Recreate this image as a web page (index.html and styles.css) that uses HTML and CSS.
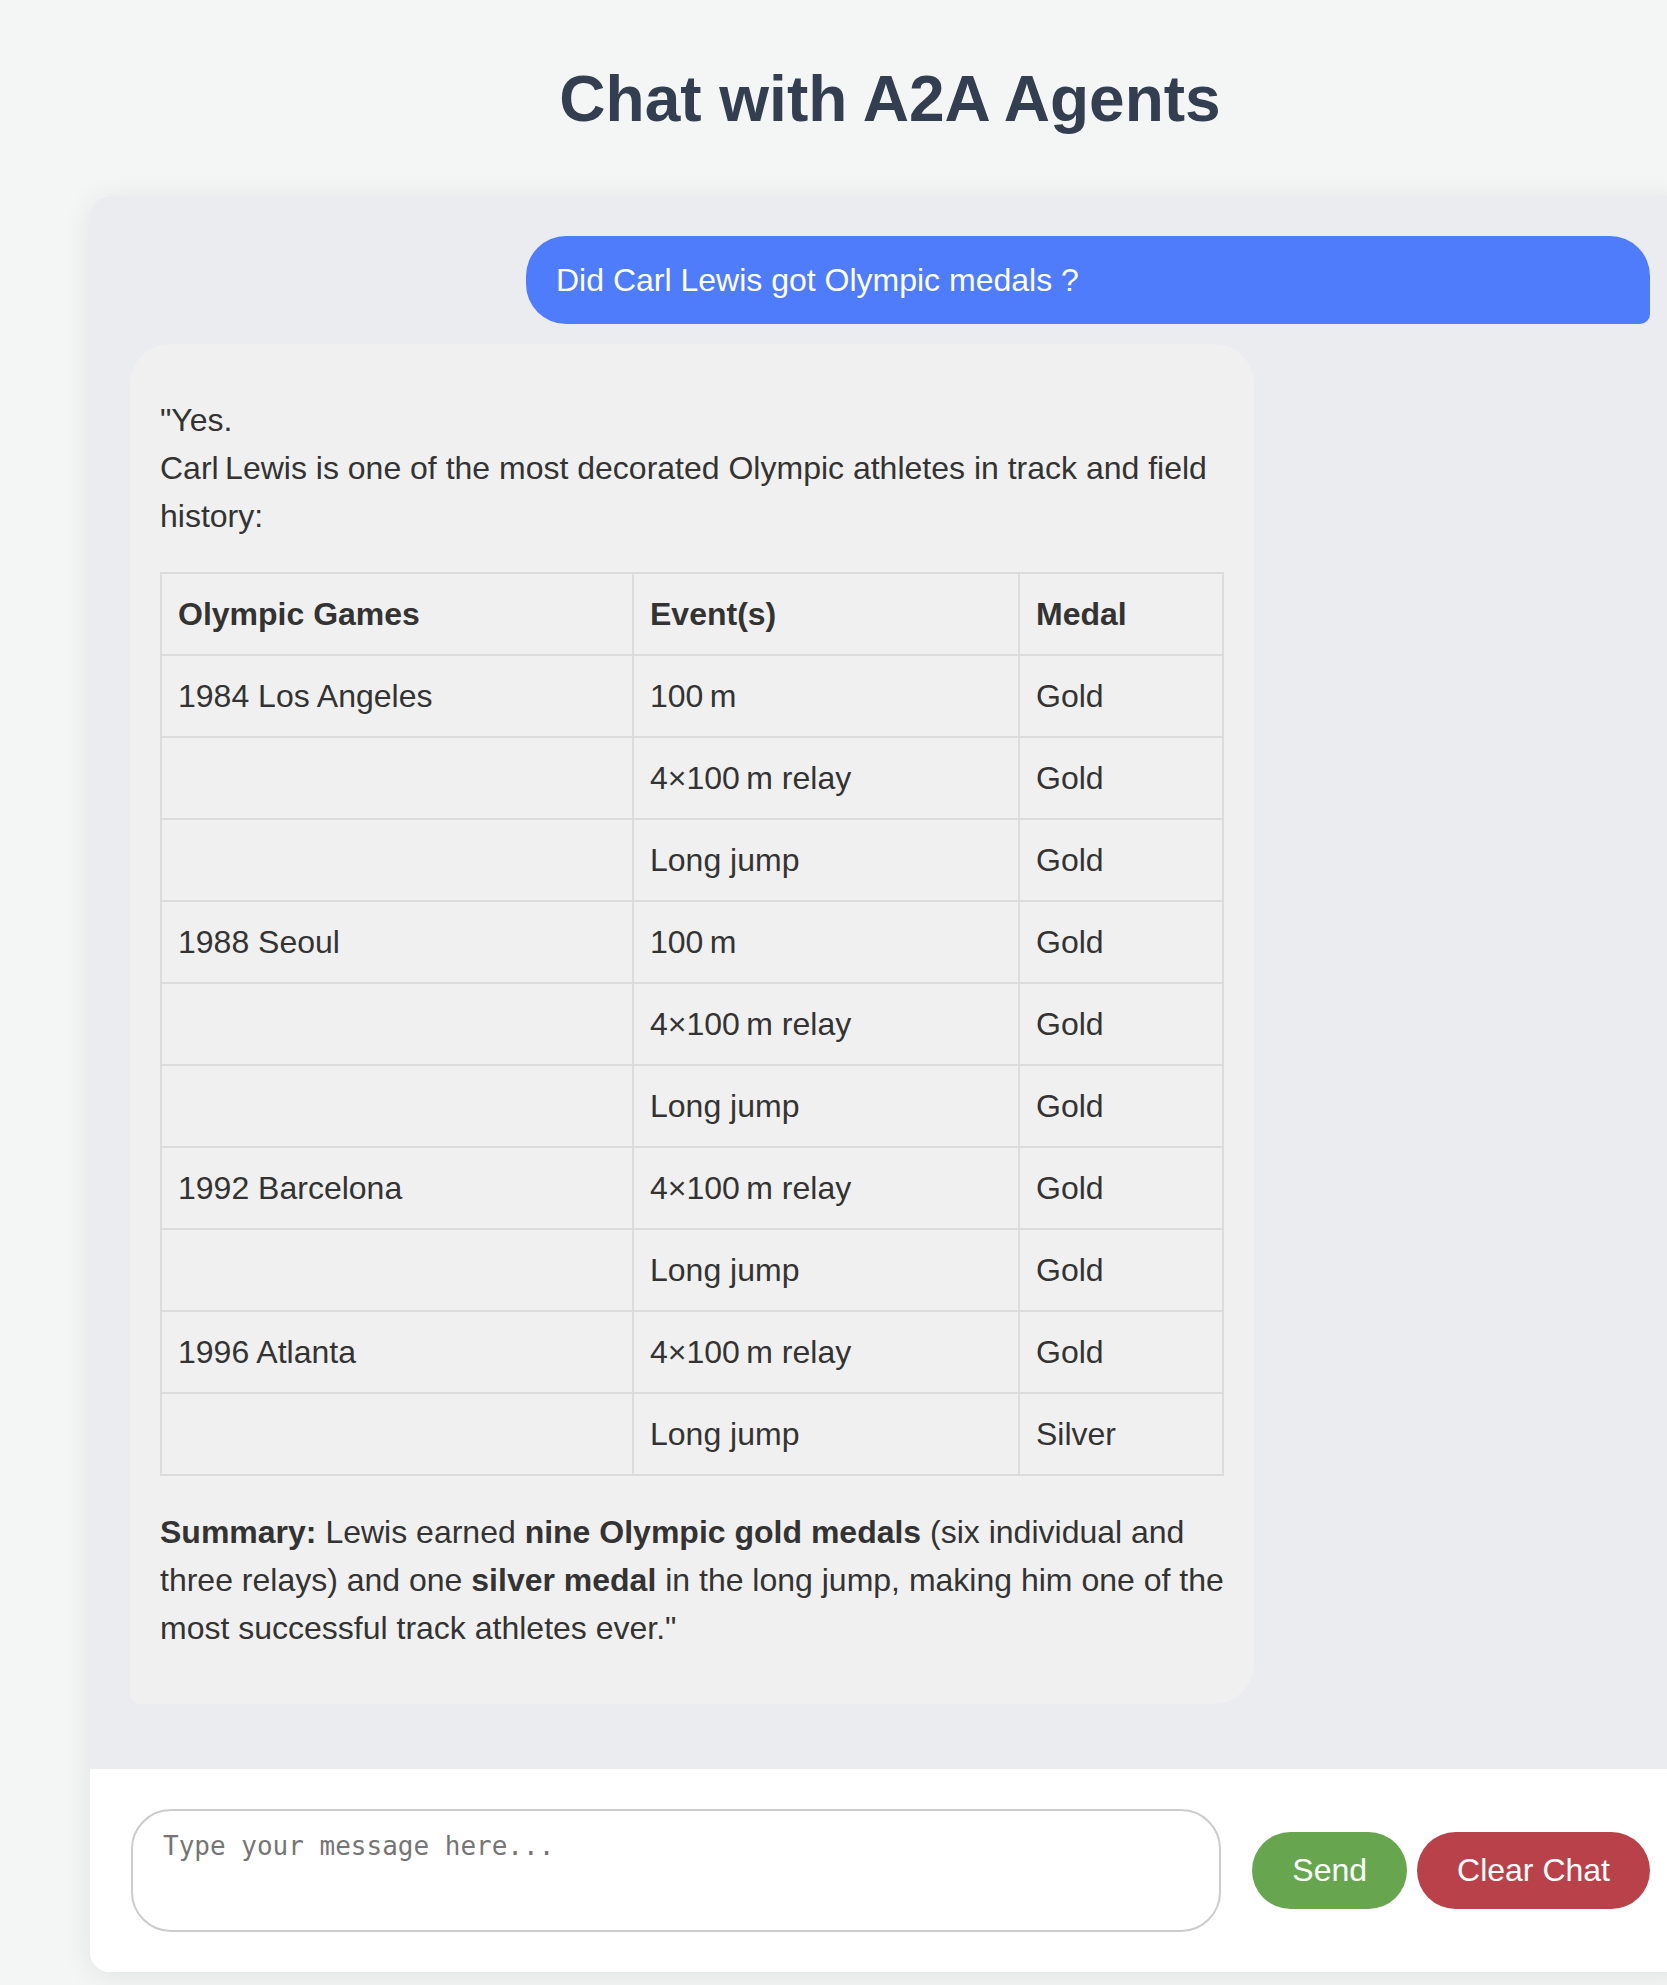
FILE: index.html
```html
<!DOCTYPE html>
<html lang="en">
<head>
<meta charset="utf-8">
<title>Chat with A2A Agents</title>
<link rel="stylesheet" href="styles.css">
</head>
<body>
<div class="page">
  <h1 class="title">Chat with A2A Agents</h1>
  <div class="chat">
    <div class="messages">
      <div class="msg user">Did Carl Lewis got Olympic medals ?</div>
      <div class="msg agent">
        <p>"Yes.<br>Carl&#8239;Lewis is one of the most decorated Olympic athletes in track and field history:</p>
        <table class="medals">
          <colgroup>
            <col class="c1">
            <col class="c2">
            <col class="c3">
          </colgroup>
          <thead>
            <tr><th>Olympic Games</th><th>Event(s)</th><th>Medal</th></tr>
          </thead>
          <tbody>
            <tr><td>1984 Los Angeles</td><td>100&#8239;m</td><td>Gold</td></tr>
            <tr><td></td><td>4×100&#8239;m relay</td><td>Gold</td></tr>
            <tr><td></td><td>Long jump</td><td>Gold</td></tr>
            <tr><td>1988 Seoul</td><td>100&#8239;m</td><td>Gold</td></tr>
            <tr><td></td><td>4×100&#8239;m relay</td><td>Gold</td></tr>
            <tr><td></td><td>Long jump</td><td>Gold</td></tr>
            <tr><td>1992 Barcelona</td><td>4×100&#8239;m relay</td><td>Gold</td></tr>
            <tr><td></td><td>Long jump</td><td>Gold</td></tr>
            <tr><td>1996 Atlanta</td><td>4×100&#8239;m relay</td><td>Gold</td></tr>
            <tr><td></td><td>Long jump</td><td>Silver</td></tr>
          </tbody>
        </table>
        <p><strong>Summary:</strong> Lewis earned <strong>nine Olympic gold medals</strong> (six individual and three relays) and one <strong>silver medal</strong> in the long jump, making him one of the most successful track athletes ever."</p>
      </div>
    </div>
    <div class="input-row">
      <textarea class="input" placeholder="Type your message here..."></textarea>
      <div class="actions">
        <button class="btn send">Send</button>
        <button class="btn clear">Clear Chat</button>
      </div>
    </div>
  </div>
</div>
</body>
</html>
```

FILE: styles.css
```css
html, body {
  margin: 0;
  padding: 0;
  overflow-x: hidden;
}

body {
  background: #f4f6f5;
  font-family: "Liberation Sans", Arial, sans-serif;
  font-size: 32px;
  line-height: 1.5;
  color: #333;
}

.page {
  width: 1600px;
  margin-left: 90px;
  padding-top: 51px;
}

.title {
  margin: 0 0 49px;
  font-size: 64px;
  line-height: 96px;
  font-weight: bold;
  text-align: center;
  color: #333f50;
}

.chat {
  border-radius: 20px;
  overflow: hidden;
  background: #fff;
  box-shadow: 0 4px 30px rgba(0, 0, 0, 0.08);
  margin-bottom: 13px;
}

.messages {
  background: #ebecf0;
  padding: 40px 40px 45px;
}

.msg {
  max-width: 70%;
  padding: 20px 30px;
  margin-bottom: 20px;
}

.user {
  margin-left: auto;
  background: #4e7cfa;
  color: #fff;
  border-radius: 40px 40px 10px 40px;
}

.agent {
  background: #f0f0f0;
  color: #333;
  border-radius: 40px 40px 40px 10px;
}

.agent p {
  margin: 32px 0;
}

.medals {
  width: 100%;
  border-collapse: collapse;
  table-layout: fixed;
}

.medals .c1 { width: 472px; }
.medals .c2 { width: 386px; }

.medals th,
.medals td {
  border: 2px solid #dcdcdc;
  padding: 16px;
  text-align: left;
  height: 48px;
}

.medals th {
  font-weight: bold;
}

.input-row {
  display: flex;
  align-items: center;
  padding: 40px;
  background: #fff;
}

.input {
  flex: 1;
  height: 123px;
  box-sizing: border-box;
  margin: 0 31px 0 1px;
  padding: 20px 30px;
  border: 2px solid #ccc;
  border-radius: 40px;
  font-family: "DejaVu Sans Mono", monospace;
  font-size: 26px;
  resize: none;
  background: #fff;
  color: #333;
}

.input::placeholder {
  color: #757575;
}

.actions {
  display: flex;
  gap: 10px;
}

.btn {
  border: none;
  border-radius: 40px;
  padding: 20px 40px;
  font-family: "Liberation Sans", Arial, sans-serif;
  font-size: 32px;
  line-height: normal;
  color: #fff;
  cursor: pointer;
}

.send {
  background: #67a64f;
}

.clear {
  background: #b9424a;
}
```
